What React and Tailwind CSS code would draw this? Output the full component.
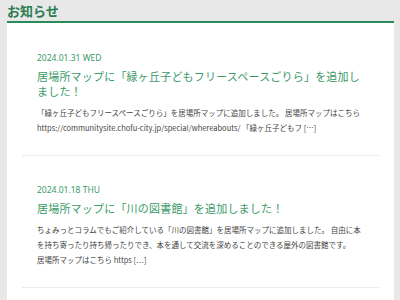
export default function App() {
  const font = { fontFamily: '"Noto Sans CJK JP", "Noto Sans", sans-serif' };
  const items = [
    {
      date: "2024.01.31 WED",
      title: ["居場所マップに「緑ヶ丘子どもフリースペースごりら」を追加し", "ました！"],
      body: [
        "「緑ヶ丘子どもフリースペースごりら」を居場所マップに追加しました。 居場所マップはこちら",
        "https://communitysite.chofu-city.jp/special/whereabouts/ 「緑ヶ丘子どもフ […]",
      ],
    },
    {
      date: "2024.01.18 THU",
      title: ["居場所マップに「川の図書館」を追加しました！"],
      body: [
        "ちょみっとコラムでもご紹介している「川の図書館」を居場所マップに追加しました。 自由に本",
        "を持ち寄ったり持ち帰ったりでき、本を通して交流を深めることのできる屋外の図書館です。",
        "居場所マップはこちら https […]",
      ],
    },
  ];
  return (
    <div className="w-[400px] h-[300px] overflow-hidden bg-[#e8e8e8] pl-[7px] pr-[6px]" style={font}>
      <h2 className="pt-[1px] text-[13px] leading-[20px] font-bold text-[#2b7d52]">お知らせ</h2>
      <div className="border-t-2 border-[#2b8a5a] bg-white h-[400px] px-[15px] pt-[1px]">
        {items.map((it, i) => (
          <div key={i} className="border-b border-[#ebebeb] px-[15px] pt-[27px] pb-[20px]">
            <div className="text-[8.5px] leading-[14px] text-[#3a9a68] font-['Noto_Sans',sans-serif]">{it.date}</div>
            <div className="mt-[4px] text-[11px] leading-[15px] tracking-[0.2px] text-[#3a9a68]">
              {it.title.map((t, j) => (
                <div key={j} className="whitespace-nowrap">{t}</div>
              ))}
            </div>
            <div className="mt-[6px] text-[7.5px] leading-[15px] text-[#444444]">
              {it.body.map((t, j) => (
                <div key={j} className="whitespace-nowrap">{t}</div>
              ))}
            </div>
          </div>
        ))}
      </div>
    </div>
  );
}
